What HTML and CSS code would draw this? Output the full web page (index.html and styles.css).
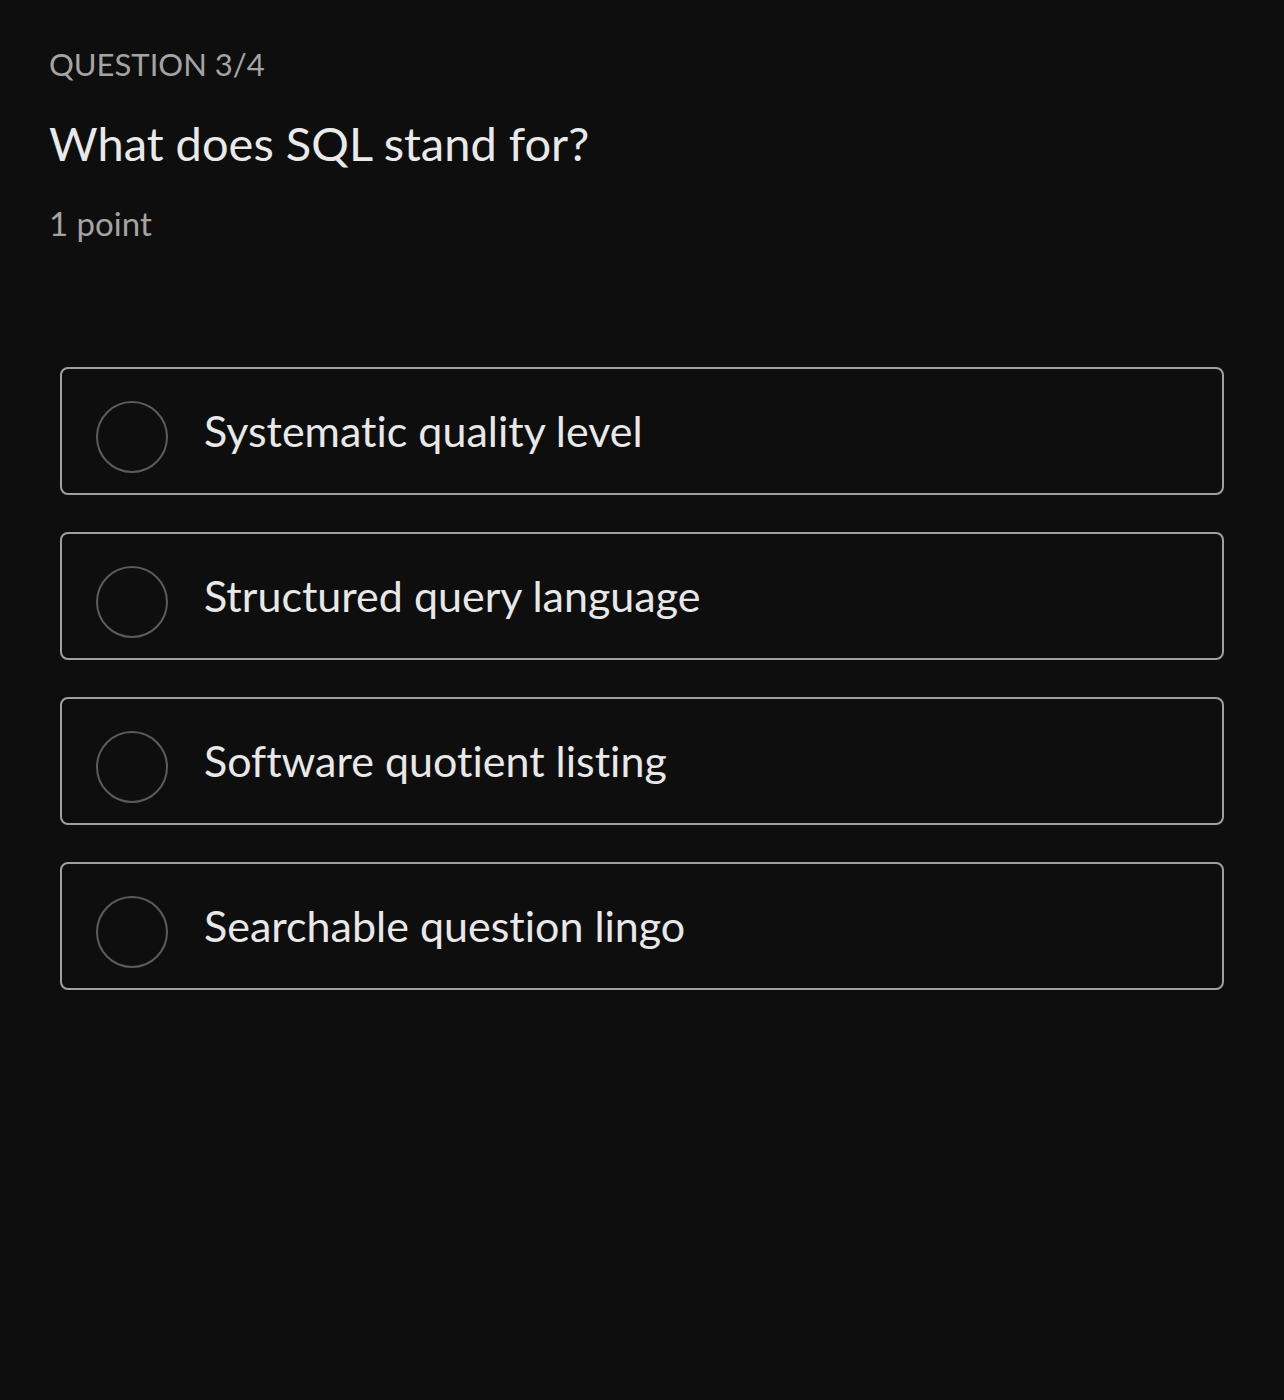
FILE: index.html
```html
<!DOCTYPE html>
<html lang="en">
<head>
<meta charset="utf-8">
<title>Quiz</title>
<link rel="stylesheet" href="styles.css">
</head>
<body>
<main class="quiz">
  <header class="quiz-head">
    <div class="q-label">QUESTION 3/4</div>
    <h1 class="q-title">What does SQL stand for?</h1>
    <div class="q-points">1 point</div>
  </header>
  <ul class="options">
    <li class="option"><span class="radio"></span><span class="opt-text">Systematic quality level</span></li>
    <li class="option"><span class="radio"></span><span class="opt-text">Structured query language</span></li>
    <li class="option"><span class="radio"></span><span class="opt-text">Software quotient listing</span></li>
    <li class="option"><span class="radio"></span><span class="opt-text">Searchable question lingo</span></li>
  </ul>
</main>
</body>
</html>
```
FILE: styles.css
```css
html, body {
  margin: 0;
  padding: 0;
  background: #0e0e0e;
  min-height: 1400px;
}
body {
  font-family: Lato, "Open Sans", sans-serif;
  font-variant-ligatures: none;
  color: #e8e8e8;
}
.quiz {
  padding: 44px 0 0 0;
}
.quiz-head {
  padding: 0 49px;
}
.q-label {
  font-size: 31px;
  line-height: 40px;
  color: #a4a4a4;
}
.q-title {
  margin: 29px 0 0 0;
  font-size: 47px;
  line-height: 60px;
  font-weight: 400;
  color: #e9e9e9;
}
.q-points {
  margin-top: 30px;
  font-size: 33px;
  line-height: 40px;
  color: #a4a4a4;
}
.options {
  list-style: none;
  margin: 124px 0 0 0;
  padding: 0 60px;
  display: flex;
  flex-direction: column;
  gap: 37px;
}
.option {
  box-sizing: border-box;
  height: 128px;
  border: 2.5px solid #a0a0a4;
  border-radius: 8px;
  display: flex;
  align-items: center;
  padding-left: 34px;
  gap: 36px;
}
.radio {
  box-sizing: border-box;
  width: 72px;
  height: 72px;
  border: 2.5px solid #5c5c5c;
  border-radius: 50%;
  flex: none;
  margin-top: 12px;
}
.opt-text {
  font-size: 43px;
  line-height: 52px;
  color: #e8e8e8;
}
```
